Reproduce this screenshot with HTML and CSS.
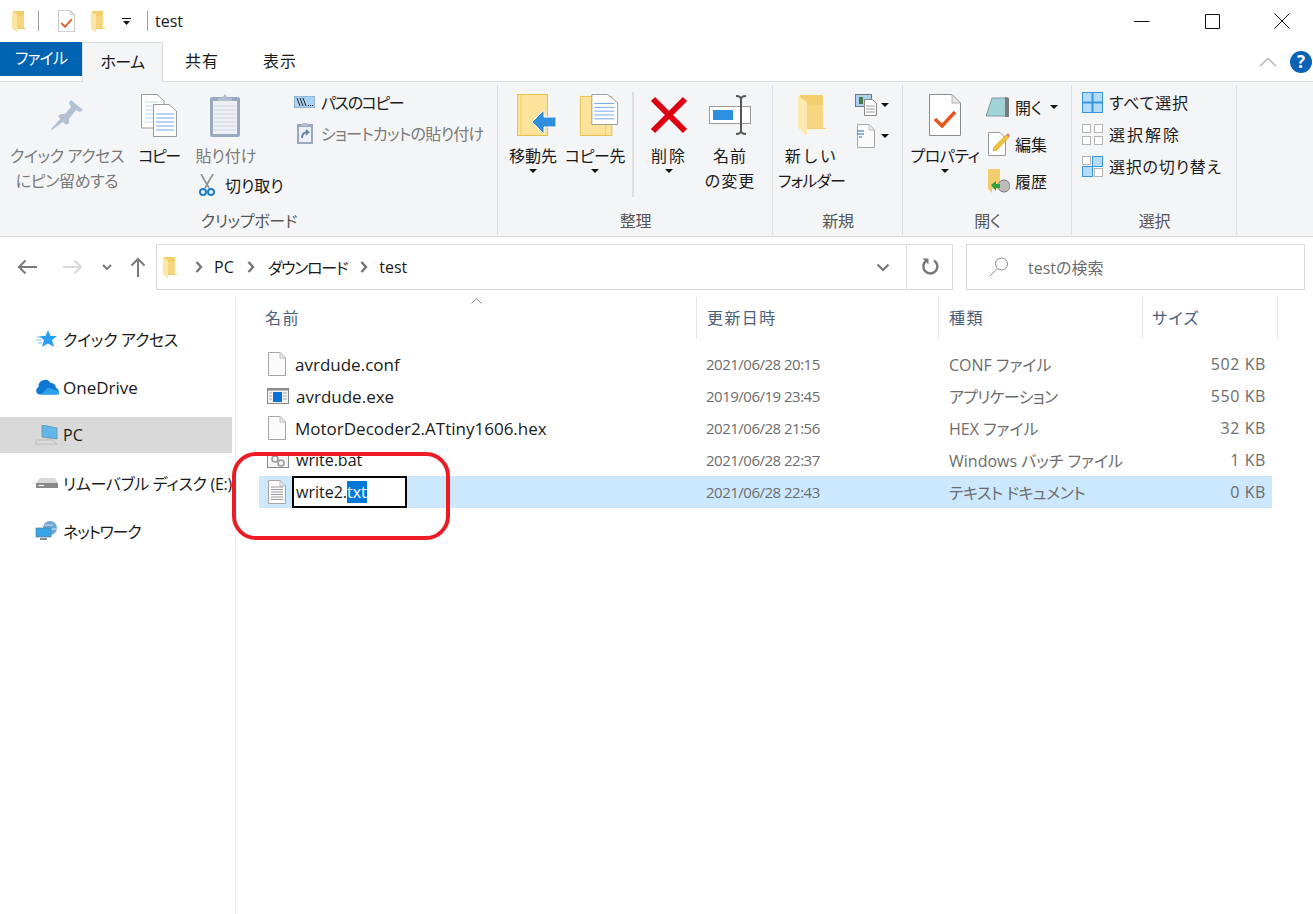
FILE: index.html
```html
<!DOCTYPE html>
<html lang="ja">
<head>
<meta charset="utf-8">
<title>test</title>
<link rel="stylesheet" href="styles.css">
</head>
<body>
<svg class="defs" width="0" height="0" aria-hidden="true">
  <defs>
    <symbol id="folder" viewBox="0 0 14 21">
      <path d="M1 0H12V17H14V18H5V21L1 18Z" fill="#f2cd6e"/>
      <path d="M0 1L5 3V21L0 17Z" fill="#fbe6a6"/>
      <path d="M5 5H12V17H5Z" fill="#f6d681"/>
    </symbol>
    <symbol id="props" viewBox="0 0 32 42">
      <path d="M.5.5H23L31.5 9V41.500H.5Z" fill="#fff" stroke="#8c8c8c"/>
      <path d="M23 .5V9H31.500Z" fill="#e8e8e8" stroke="#b0b0b0"/>
      <path d="M6 25L13 32L26 18" fill="none" stroke="#e8541c" stroke-width="3.500"/>
    </symbol>
    <symbol id="doc" viewBox="0 0 18 24">
      <path d="M.5.5H12L17.500 6V23.500H.5Z" fill="#fbfbfb" stroke="#a6a6a6"/>
      <path d="M12 .5V6H17.500Z" fill="#f0f0f0" stroke="#bcbcbc"/>
    </symbol>
  </defs>
</svg>

<header class="titlebar">
  <svg class="ic-folder-s"><use href="#folder"/></svg>
  <span class="qsep"></span>
  <svg class="ic-props-s"><use href="#props"/></svg>
  <svg class="ic-folder-s ic-folder-q"><use href="#folder"/></svg>
  <svg class="ic-qdrop" viewBox="0 0 9 7"><path d="M0 0H9V1H0ZM1 3H8L4.500 7Z" fill="#111"/></svg>
  <span class="qsep qsep-b"></span>
  <span class="title">test</span>
  <div class="winctl">
    <svg class="wbtn" viewBox="0 0 16 16"><path d="M0 8.500H15.500" stroke="#111" fill="none"/></svg>
    <svg class="wbtn" viewBox="0 0 16 16"><path d="M1.500 1.500H15.500V15.500H1.500Z" stroke="#111" fill="none"/></svg>
    <svg class="wbtn" viewBox="0 0 16 16"><path d="M.5.500L15.500 15.500M15.500.5L.5 15.500" stroke="#111" fill="none"/></svg>
  </div>
</header>

<nav class="tabs">
  <div class="tab tab-file">ファイル</div>
  <div class="tab tab-home">ホーム</div>
  <div class="tab tab-share">共有</div>
  <div class="tab tab-view">表示</div>
  <div class="tabs-right">
    <svg class="collapse" viewBox="0 0 18 10"><path d="M1 9L9 1.500L17 9" fill="none" stroke="#b8b8b8" stroke-width="1.600"/></svg>
    <span class="help">?</span>
  </div>
</nav>

<section class="ribbon">
  <div class="group g-clip">
    <div class="gbody">
      <div class="big w-pin dis">
        <div class="bigicon"><svg class="i-pin" viewBox="0 0 32 30"><path d="M20 0L32 10L29 12L25 10L18 19L18 23L15 25L7 16L10 14L14 14L20 7L18 3Z" fill="#b4c0d3"/><path d="M10 18L13 21L1 30L0 29Z" fill="#b4c0d3"/></svg></div>
        <div class="lab lab-pin">クイック アクセス<br>にピン留めする</div>
      </div>
      <div class="big w-copy">
        <div class="bigicon"><svg class="i-copy" viewBox="0 0 36 43">
          <path d="M.5.5H16L23 7V34H.5Z" fill="#fff" stroke="#9a9a9a"/>
          <path d="M4 8H18M4 12H20M4 16H20M4 20H20M4 24H20M4 28H20" stroke="#c2d5f2"/>
          <path d="M12.500 10.500H28L35.500 17V42.500H12.500Z" fill="#fff" stroke="#9a9a9a"/>
          <path d="M15 20H33M15 24H33M15 28H33M15 32H33M15 36H33" stroke="#6ea5ee"/>
        </svg></div>
        <div class="lab lab-copy">コピー</div>
      </div>
      <div class="col-paste">
        <div class="big w-paste dis">
          <div class="bigicon"><svg class="i-paste" viewBox="0 0 32 44">
            <rect x="0" y="4" width="30" height="40" rx="2" fill="#9aa8c0"/>
            <rect x="3" y="8" width="24" height="33" fill="#eef0f5"/>
            <path d="M4 13H26M4 17H26M4 21H26M4 25H26M4 29H26M4 33H26M4 37H26" stroke="#ccd2de"/>
            <path d="M8 8V5H12L15 1L18 5H22V8Z" fill="#b4bfd2"/>
          </svg></div>
          <div class="lab">貼り付け</div>
        </div>
        <div class="row-cut">
          <svg class="i-cut" viewBox="0 0 16 22"><path d="M2 0L10 14M14 0L6 14" stroke="#8b8f97" stroke-width="1.600" fill="none"/><circle cx="4" cy="18" r="3" fill="none" stroke="#1b80c8" stroke-width="2"/><circle cx="12" cy="18" r="3" fill="none" stroke="#1b80c8" stroke-width="2"/></svg>
          <span>切り取り</span>
        </div>
      </div>
      <div class="slist s-clip">
        <div class="srow"><svg class="i-path" viewBox="0 0 21 12"><rect x=".5" y=".5" width="20" height="11" fill="#a9d1f2" stroke="#8fb6d6"/><path d="M3 2L6 10M6 2L9 10M9 2L12 10" stroke="#222" fill="none"/><path d="M14 9.500H15M16 9.500H17M18 9.500H19" stroke="#222"/></svg><span class="tw-path">パスのコピー</span></div>
        <div class="srow dis"><svg class="i-short" viewBox="0 0 16 23"><rect x="0" y="3" width="16" height="20" fill="#9aa8c0"/><rect x="2" y="6" width="12" height="15" fill="#eef0f5"/><path d="M5 2H11V5H5Z" fill="#b4bfd2"/><path d="M5 17C5 13 7 11 11 11L9 9M11 11L9 14" stroke="#6c86a8" stroke-width="2" fill="none"/></svg><span class="tw-short">ショートカットの貼り付け</span></div>
      </div>
    </div>
    <div class="glabel">クリップボード</div>
  </div>

  <div class="group g-org">
    <div class="gbody">
      <div class="big w-move">
        <div class="bigicon bi-shift"><svg class="i-move" viewBox="0 0 40 42"><rect x=".5" y=".5" width="30" height="41" fill="#fbe39b" stroke="#e9c04c"/><path d="M4 1V41" stroke="#f0cc66" fill="none"/><path d="M15 28L27 16V23H39V33H27V40Z" fill="#2f8fdc" stroke="#fff"/></svg></div>
        <div class="lab">移動先</div>
        <span class="caret"></span>
      </div>
      <div class="big w-move">
        <div class="bigicon bi-shift"><svg class="i-move" viewBox="0 0 40 44"><rect x=".5" y="2.500" width="33" height="41" fill="#fbe39b" stroke="#e9c04c"/><path d="M27 3V43" stroke="#f0cc66" fill="none"/><path d="M12.500.5H29L39.500 9V32H12.500Z" fill="#fff" stroke="#9a9a9a"/><path d="M15 10H36M15 14H36M15 18H36M15 22H36M15 26H36" stroke="#6ea5ee"/></svg></div>
        <div class="lab lab-tight">コピー先</div>
        <span class="caret"></span>
      </div>
      <span class="vsep"></span>
      <div class="big w-del">
        <div class="bigicon"><svg class="i-del" viewBox="0 0 38 38"><path d="M3 3L35 35M35 3L3 35" stroke="#dd0010" stroke-width="6" fill="none"/></svg></div>
        <div class="lab lab-wide">削除</div>
        <span class="caret"></span>
      </div>
      <div class="big w-ren">
        <div class="bigicon"><svg class="i-ren" viewBox="0 0 42 40"><rect x=".5" y="11.500" width="41" height="17" fill="#fff" stroke="#9a9a9a"/><rect x="4" y="15" width="20" height="10" fill="#2d8fe0"/><path d="M27 1C31 1 32 2 32 5V35C32 38 31 39 27 39M37 1C33 1 32 2 32 5M32 35C32 38 33 39 37 39" stroke="#555" stroke-width="2" fill="none"/></svg></div>
        <div class="lab lab-ren">名前<br>の変更</div>
      </div>
    </div>
    <div class="glabel">整理</div>
  </div>

  <div class="group g-new">
    <div class="gbody">
      <div class="big w-newf">
        <div class="bigicon"><svg class="i-newf" viewBox="0 0 28 40"><path d="M2 0H25V33H28V34H9V40L1 33Z" fill="#f3cf70"/><path d="M0 1L9 7V40L0 33Z" fill="#fce9ae"/><path d="M9 10L25 10V33H9Z" fill="#f6d681"/></svg></div>
        <div class="lab"><span class="lab-new">新しい</span><br><span class="lab-fol">フォルダー</span></div>
      </div>
      <div class="newsmall">
        <div class="nrow"><svg class="i-ns" viewBox="0 0 22 22"><rect x=".5" y=".5" width="16" height="12" fill="#a9d1f2" stroke="#777"/><rect x="4" y="3" width="4" height="7" fill="#4a7a4a"/><path d="M9.500 5.500H17L21.500 9V21.500H9.500Z" fill="#fff" stroke="#888"/><path d="M11 12H20M11 15H20M11 18H20" stroke="#9c9c9c"/></svg><span class="caret"></span></div>
        <div class="nrow"><svg class="i-ns i-ns2" viewBox="0 0 18 24"><use href="#doc"/><path d="M0 7H7M0 10H7M2 13H5" stroke="#1a6fc0"/></svg><span class="caret"></span></div>
      </div>
    </div>
    <div class="glabel">新規</div>
  </div>

  <div class="group g-open">
    <div class="gbody">
      <div class="big w-prop">
        <div class="bigicon"><svg class="i-prop"><use href="#props"/></svg></div>
        <div class="lab lab-tight">プロパティ</div>
        <span class="caret"></span>
      </div>
      <div class="slist s-open">
        <div class="srow"><svg class="i-open" viewBox="0 0 24 22"><path d="M6 2H22V20H0Z" fill="#9fd3d8" stroke="#7a9aa0"/><path d="M19 1L23 2V21L19 21Z" fill="#7b7b7b"/></svg><span>開く</span><span class="caret caret-o"></span></div>
        <div class="srow"><svg class="i-edit" viewBox="0 0 22 24"><path d="M.5.5H12L17.500 6V23.500H.5Z" fill="#fff" stroke="#9a9a9a"/><path d="M5 19L6 15L18 3L21 5L9 18Z" fill="#f3c33d" stroke="#c69a1e" stroke-width=".6"/><path d="M18 3L20 1L22 4L21 5Z" fill="#ea7d7d"/></svg><span>編集</span></div>
        <div class="srow"><svg class="i-hist" viewBox="0 0 22 24"><path d="M0 0H12V19H14V20H4V24L0 20Z" fill="#f2cd6e"/><circle cx="16" cy="17" r="6" fill="#bdbdbd" stroke="#777"/><path d="M3 16L8 12V15H12V19H8V22Z" fill="#2ea043"/></svg><span>履歴</span></div>
      </div>
    </div>
    <div class="glabel">開く</div>
  </div>

  <div class="group g-sel">
    <div class="gbody">
      <div class="slist s-sel">
        <div class="srow"><svg class="i-sel" viewBox="0 0 21 21"><rect x=".5" y=".5" width="20" height="20" fill="#b4dcfc" stroke="#3a96e0"/><path d="M10.500 0V21M0 10.500H21" stroke="#3a96e0" stroke-width="2"/></svg><span>すべて選択</span></div>
        <div class="srow"><svg class="i-sel" viewBox="0 0 21 21"><g fill="#fff" stroke="#b5b5b5"><rect x=".5" y=".5" width="8" height="8"/><rect x="12.500" y=".5" width="8" height="8"/><rect x=".5" y="12.500" width="8" height="8"/><rect x="12.500" y="12.500" width="8" height="8"/></g></svg><span class="t-sp2">選択解除</span></div>
        <div class="srow"><svg class="i-sel" viewBox="0 0 21 21"><g fill="#fff" stroke="#b5b5b5"><rect x=".5" y=".5" width="8" height="8"/><rect x="12.500" y="12.500" width="8" height="8"/></g><g fill="#b4dcfc" stroke="#3a96e0"><rect x="10.500" y=".5" width="10" height="10"/><rect x=".5" y="10.500" width="10" height="10"/></g></svg><span>選択の切り替え</span></div>
      </div>
    </div>
    <div class="glabel">選択</div>
  </div>
</section>

<section class="addr">
  <div class="navbtns">
    <svg class="nb nb-back" viewBox="0 0 20 16"><path d="M20 8H2M8.500 1.500L2 8L8.500 14.500" fill="none" stroke="#7a7a7a" stroke-width="2"/></svg>
    <svg class="nb nb-fwd" viewBox="0 0 20 16"><path d="M0 8H18M11.500 1.500L18 8L11.500 14.500" fill="none" stroke="#d9d9d9" stroke-width="2"/></svg>
    <svg class="nb-down" viewBox="0 0 10 6"><path d="M1 1L5 5L9 1" fill="none" stroke="#777" stroke-width="1.800"/></svg>
    <svg class="nb-up" viewBox="0 0 16 20"><path d="M8 20V2M1.500 8.500L8 2L14.500 8.500" fill="none" stroke="#7a7a7a" stroke-width="2"/></svg>
  </div>
  <div class="addrbox">
    <svg class="ic-folder-s ic-folder-a"><use href="#folder"/></svg>
    <svg class="crumb" viewBox="0 0 8 12"><path d="M1.500 1L6 6L1.500 11" fill="none" stroke="#777" stroke-width="2.400"/></svg>
    <span class="ctext">PC</span>
    <svg class="crumb" viewBox="0 0 8 12"><path d="M1.500 1L6 6L1.500 11" fill="none" stroke="#777" stroke-width="2.400"/></svg>
    <span class="ctext ctext-dl">ダウンロード</span>
    <svg class="crumb" viewBox="0 0 8 12"><path d="M1.500 1L6 6L1.500 11" fill="none" stroke="#777" stroke-width="2.400"/></svg>
    <span class="ctext">test</span>
    <svg class="addrdrop" viewBox="0 0 14 9"><path d="M1.500 1.500L7 7L12.500 1.500" fill="none" stroke="#777" stroke-width="2.200"/></svg>
    <div class="refresh"><svg class="i-ref" viewBox="0 0 18 18"><path d="M13 2.500A7 7 0 1 1 5 3" fill="none" stroke="#777" stroke-width="2.400"/><path d="M1.500 .5H7.500V6.500Z" fill="#777"/></svg></div>
  </div>
  <div class="search">
    <svg class="i-search" viewBox="0 0 20 20"><circle cx="12.500" cy="7" r="6" fill="none" stroke="#888"/><path d="M8 11.500L1 19" stroke="#888" fill="none"/></svg>
    <span>testの検索</span>
  </div>
</section>

<main class="content">
  <aside class="navpane">
    <div class="navitem"><svg class="ni" viewBox="0 0 24 20"><path d="M13 1L15.500 7H22L17 11L19 18L13 14.500L7 18L9 11L4 7H10.500Z" fill="#2a9df4"/><path d="M2 8H7M1 11H6M3 14H7" stroke="#7cc0f5"/></svg><span class="n-tight">クイック アクセス</span></div>
    <div class="navitem"><svg class="ni" viewBox="0 0 24 16"><path d="M4 15.500A4 4 0 0 1 3.500 8A6.500 6.500 0 0 1 15.500 4A5 5 0 0 1 21 9A3.300 3.300 0 0 1 20 15.500Z" fill="#0f78d4"/><path d="M6 15.500L13 8.500L24 12V15.500Z" fill="#2aa2ea"/></svg><span class="n-big">OneDrive</span></div>
    <div class="navitem nav-sel"><svg class="ni" viewBox="0 0 24 20"><path d="M7 0L22 3V14L7 12Z" fill="#5fb7ea" stroke="#6a8fa6" stroke-width=".8"/><path d="M2 15L17 15L22 19H0Z" fill="#dcdcdc" stroke="#a8a8a8" stroke-width=".6"/></svg><span>PC</span></div>
    <div class="navitem"><svg class="ni" viewBox="0 0 24 12"><path d="M5 1H20L23 6V10H1V6Z" fill="#d9d9d9"/><path d="M1 6H23V11H1Z" fill="#8a8a8a"/><path d="M4 8H9V9H4Z" fill="#fff"/></svg><span class="n-tight2">リムーバブル ディスク (E:)</span></div>
    <div class="navitem"><svg class="ni" viewBox="0 0 22 20"><circle cx="14" cy="7" r="7" fill="#6aa6d8"/><path d="M9 4H17M7 8H21" stroke="#cfe4f5"/><rect x="0" y="7" width="15" height="9" fill="#35a4e8" stroke="#5a7f99" stroke-width=".7"/><path d="M4 17H11V19H4Z" fill="#8a8a8a"/></svg><span class="n-tight3">ネットワーク</span></div>
  </aside>

  <div class="listpane">
    <div class="colhead">
      <svg class="sortup" viewBox="0 0 11 6"><path d="M.5 5.500L5.500 .5L10.500 5.500" fill="none" stroke="#888"/></svg>
      <div class="hc hc-name">名前</div>
      <div class="hc hc-date">更新日時</div>
      <div class="hc hc-type">種類</div>
      <div class="hc hc-size">サイズ</div>
    </div>
    <div class="rows">
      <div class="frow">
        <div class="fname"><svg class="fi"><use href="#doc"/></svg>avrdude.conf</div>
        <div class="fdate">2021/06/28 20:15</div><div>CONF ファイル</div><div class="fsize">502 KB</div>
      </div>
      <div class="frow">
        <div class="fname"><svg class="fi fi-exe" viewBox="0 0 22 16"><rect x=".5" y=".5" width="21" height="15" fill="#f4f4f4" stroke="#8a8a8a"/><path d="M1 1.500H21" stroke="#8a8a8a" stroke-width="2"/><rect x="6" y="4" width="9" height="10" fill="#0a6fd6"/><path d="M2 5H5M2 8H5M2 11H5M16 5H20M16 8H20M16 11H20" stroke="#aaa"/></svg>avrdude.exe</div>
        <div class="fdate">2019/06/19 23:45</div><div class="t-app">アプリケーション</div><div class="fsize">550 KB</div>
      </div>
      <div class="frow">
        <div class="fname"><svg class="fi"><use href="#doc"/></svg>MotorDecoder2.ATtiny1606.hex</div>
        <div class="fdate">2021/06/28 21:56</div><div>HEX ファイル</div><div class="fsize">32 KB</div>
      </div>
      <div class="frow">
        <div class="fname fname-s"><svg class="fi fi-exe" viewBox="0 0 22 16"><rect x=".5" y=".5" width="21" height="15" fill="#f4f4f4" stroke="#8a8a8a"/><path d="M1 1.500H21" stroke="#8a8a8a" stroke-width="2"/><circle cx="8" cy="7" r="3" fill="none" stroke="#999" stroke-width="1.500"/><circle cx="14" cy="11" r="3" fill="none" stroke="#999" stroke-width="1.500"/></svg>write.bat</div>
        <div class="fdate">2021/06/28 22:37</div><div>Windows バッチ ファイル</div><div class="fsize">1 KB</div>
      </div>
      <div class="frow frow-sel">
        <div class="fname fname-s"><svg class="fi fi-txt" viewBox="0 0 18 24"><use href="#doc"/><path d="M3 7H15M3 9.500H15M3 12H15M3 14.500H15M3 17H15M3 19.500H15" stroke="#9a9a9a"/></svg><span class="rename">write2.<span class="selx">txt</span></span></div>
        <div class="fdate">2021/06/28 22:43</div><div class="t-doc">テキスト ドキュメント</div><div class="fsize">0 KB</div>
      </div>
    </div>
  </div>
  <span class="annot"></span>
</main>
</body>
</html>
```

FILE: styles.css
```css
* { box-sizing: border-box; }
html, body { margin: 0; padding: 0; }
body {
  width: 1313px;
  height: 914px;
  overflow: hidden;
  background: #fff;
  color: #1a1a1a;
  font-family: "Open Sans", "Noto Sans CJK JP", sans-serif;
  font-size: 16px;
  font-feature-settings: "palt";
}
svg { display: block; flex: none; }
.defs { position: absolute; }

/* title bar */
.titlebar { height: 42px; display: flex; align-items: center; padding-left: 12px; }
.ic-folder-s { width: 14px; height: 21px; }
.qsep { width: 1px; height: 20px; background: #a0a0a0; margin-left: 12px; }
.ic-props-s { width: 17px; height: 22px; margin-left: 19px; }
.ic-folder-q { margin-left: 16px; }
.ic-qdrop { width: 9px; height: 7px; margin-left: 17px; }
.qsep-b { margin-left: 16px; }
.title { margin-left: 7px; font-size: 16px; }
.winctl { margin-left: auto; display: flex; gap: 54px; padding-right: 23px; }
.wbtn { width: 16px; height: 16px; }

/* tabs */
.tabs { height: 39px; display: flex; align-items: flex-start; position: relative; z-index: 1; }
.tab { height: 39px; line-height: 38px; text-align: center; }
.tab-file { width: 82px; height: 34px; line-height: 32px; background: #0063b1; color: #fff; letter-spacing: -.8px; }
.tab-home { width: 81px; height: 40px; background: #f4f5f7; border: 1px solid #d9d9d9; border-bottom: 0; letter-spacing: -.6px; }
.tab-share { width: 78px; letter-spacing: 1px; }
.tab-view { width: 78px; letter-spacing: 1px; }
.tabs-right { margin-left: auto; display: flex; align-items: center; gap: 13px; height: 39px; padding-right: 1px; }
.collapse { width: 18px; height: 10px; }
.help { width: 22px; height: 22px; border-radius: 50%; background: #0a63b5; color: #fff; font-weight: 700; font-size: 17px; line-height: 22px; text-align: center; }

/* ribbon */
.ribbon { height: 156px; background: #f4f5f7; border-top: 1px solid #d9d9d9; border-bottom: 1px solid #d9d9d9; display: flex; }
.group { display: flex; flex-direction: column; height: 154px; padding-top: 4px; position: relative; }
.group::after { content: ""; position: absolute; right: 0; top: 3px; bottom: 1px; width: 1px; background: #dcdee0; }
.g-clip { width: 498px; }
.g-org { width: 275px; }
.g-new { width: 130px; }
.g-open { width: 169px; }
.g-sel { width: 165px; }
.gbody { flex: 1; display: flex; align-items: flex-start; }
.glabel { height: 24px; line-height: 22px; text-align: center; color: #555; margin-bottom: 2px; letter-spacing: -.3px; }

.big { display: flex; flex-direction: column; align-items: center; }
.bigicon { height: 58px; display: flex; align-items: center; justify-content: center; }
.bi-shift { padding-left: 8px; }
.lab { line-height: 25px; text-align: center; white-space: nowrap; }
.lab-tight { letter-spacing: -.4px; }
.lab-pin { letter-spacing: -.4px; }
.lab-copy { letter-spacing: -1.5px; }
.lab-wide { letter-spacing: 2px; }
.lab-ren { letter-spacing: 1px; }
.lab-new { letter-spacing: 3px; }
.lab-fol { letter-spacing: -.8px; }
.dis, .dis .lab { color: #7a7a7a; }
.caret { display: block; width: 0; height: 0; border: 4px solid transparent; border-top: 4px solid #111; border-bottom: 0; }

.w-pin { width: 130px; margin-left: 2px; }
.i-pin { width: 32px; height: 30px; }
.w-copy { width: 50px; margin-left: 2px; }
.i-copy { width: 36px; height: 43px; }
.col-paste { width: 96px; margin-left: 7px; display: flex; flex-direction: column; }
.w-paste { width: 70px; }
.i-paste { width: 32px; height: 44px; }
.row-cut { display: flex; align-items: center; gap: 10px; margin-top: 3px; padding-left: 8px; height: 26px; }
.i-cut { width: 16px; height: 22px; }

.slist { display: flex; flex-direction: column; }
.srow { display: flex; align-items: center; white-space: nowrap; }
.s-clip { margin-left: 7px; }
.s-clip .srow { height: 31px; gap: 6px; }
.i-path { width: 21px; height: 12px; }
.i-short { width: 16px; height: 23px; margin: 0 2px 0 3px; }
.tw-path { letter-spacing: -1.4px; }
.tw-short { color: #7a7a7a; letter-spacing: -.7px; }

.w-move { width: 62px; }
.i-move { width: 40px; height: 42px; }
.g-org .gbody { padding-left: 4px; }
.vsep { width: 2px; height: 105px; background: #dcdee0; margin: 6px 5px 0 6px; }
.w-del { width: 60px; }
.i-del { width: 38px; height: 38px; }
.w-ren { width: 62px; }
.i-ren { width: 42px; height: 40px; }

.w-newf { width: 77px; }
.i-newf { width: 28px; height: 40px; }
.newsmall { display: flex; flex-direction: column; gap: 9px; margin-left: 5px; padding-top: 8px; }
.nrow { display: flex; align-items: center; gap: 4px; height: 22px; }
.i-ns { width: 22px; height: 22px; }
.i-ns2 { width: 18px; height: 24px; margin: 0 2px; }

.w-prop { width: 80px; margin-left: 2px; }
.i-prop { width: 32px; height: 42px; }
.s-open { padding-top: 2px; margin-left: 1px; }
.s-open .srow { height: 37px; gap: 5px; }
.i-open { width: 24px; height: 22px; }
.i-edit { width: 22px; height: 24px; margin-left: 2px; }
.i-hist { width: 22px; height: 24px; margin-left: 2px; }
.caret-o { margin-left: 3px; }

.s-sel { padding: 0 0 0 10px; letter-spacing: .8px; }
.s-sel .srow { height: 32px; gap: 6px; }
.t-sp2 { letter-spacing: 2px; }
.i-sel { width: 21px; height: 21px; }

/* address row */
.addr { height: 60px; display: flex; align-items: center; }
.navbtns { width: 156px; display: flex; align-items: center; padding-left: 17px; }
.nb { width: 20px; height: 16px; }
.nb-fwd { margin-left: 26px; }
.nb-down { width: 10px; height: 6px; margin-left: 19px; }
.nb-up { width: 16px; height: 20px; margin-left: 18px; }
.addrbox { width: 797px; height: 46px; border: 1px solid #d9d9d9; display: flex; align-items: center; padding-left: 6px; }
.ic-folder-a { margin-right: 18px; }
.crumb { width: 8px; height: 12px; }
.ctext { margin: 0 13px 0 11px; white-space: nowrap; }
.ctext-dl { letter-spacing: -1.3px; margin-left: 13px; }
.addrdrop { width: 14px; height: 9px; margin-left: auto; }
.refresh { width: 46px; height: 44px; margin-left: 16px; border-left: 1px solid #d9d9d9; display: flex; align-items: center; justify-content: center; }
.i-ref { width: 18px; height: 18px; }
.search { width: 339px; height: 46px; margin-left: 13px; border: 1px solid #d9d9d9; display: flex; align-items: center; padding-left: 22px; gap: 19px; color: #6d6d6d; }
.i-search { width: 20px; height: 20px; }

/* content */
.content { height: 617px; display: flex; position: relative; }
.navpane { width: 236px; border-right: 1px solid #efefef; padding-top: 24px; display: flex; flex-direction: column; gap: 12px; }
.navitem { height: 36px; width: 232px; display: flex; align-items: center; white-space: nowrap; }
.nav-sel { background: #d9d9d9; }
.ni { width: 24px; height: 20px; margin: 0 4px 0 35px; }
.n-tight { letter-spacing: -.3px; }
.n-tight2 { letter-spacing: -.3px; }
.n-tight3 { letter-spacing: -1.2px; }
.n-big { font-size: 17px; }
.listpane { flex: 1; padding-left: 23px; }
.colhead { display: flex; height: 42px; position: relative; }
.sortup { position: absolute; left: 212px; top: 1px; width: 11px; height: 6px; }
.hc { border-right: 1px solid #e5e5e5; padding-left: 6px; line-height: 42px; color: #4c607a; letter-spacing: 1.4px; }
.hc-name { width: 438px; }
.hc-date { width: 242px; padding-left: 10px; }
.hc-type { width: 204px; padding-left: 10px; }
.hc-size { width: 135px; padding-left: 9px; }
.rows { padding-top: 9px; }
.frow { display: grid; grid-template-columns: 447px 243px 221px 96px; width: 1013px; height: 32px; align-items: center; color: #6d6d6d; white-space: nowrap; }
.frow-sel { background: #cce8ff; }
.fname { display: flex; align-items: center; color: #1a1a1a; padding-left: 9px; font-size: 17px; }
.fname-s { font-size: 16px; }
.fdate { font-size: 15px; letter-spacing: -.5px; }
.t-app { letter-spacing: -.7px; }
.t-doc { letter-spacing: -.5px; }
.fsize { text-align: right; letter-spacing: .6px; }
.fi { width: 18px; height: 24px; margin-right: 9px; }
.fi-exe { width: 22px; height: 16px; margin: 0 7px 0 -1px; }
.fi-txt { margin-right: 6px; }
.rename { display: block; width: 115px; height: 32px; border: 2px solid #000; background: #fff; line-height: 28px; padding-left: 2px; }
.selx { background: #0078d7; color: #fff; }
.annot { position: absolute; left: 232px; top: 155px; width: 218px; height: 88px; border: 4px solid #ed1c24; border-radius: 24px; }
```
